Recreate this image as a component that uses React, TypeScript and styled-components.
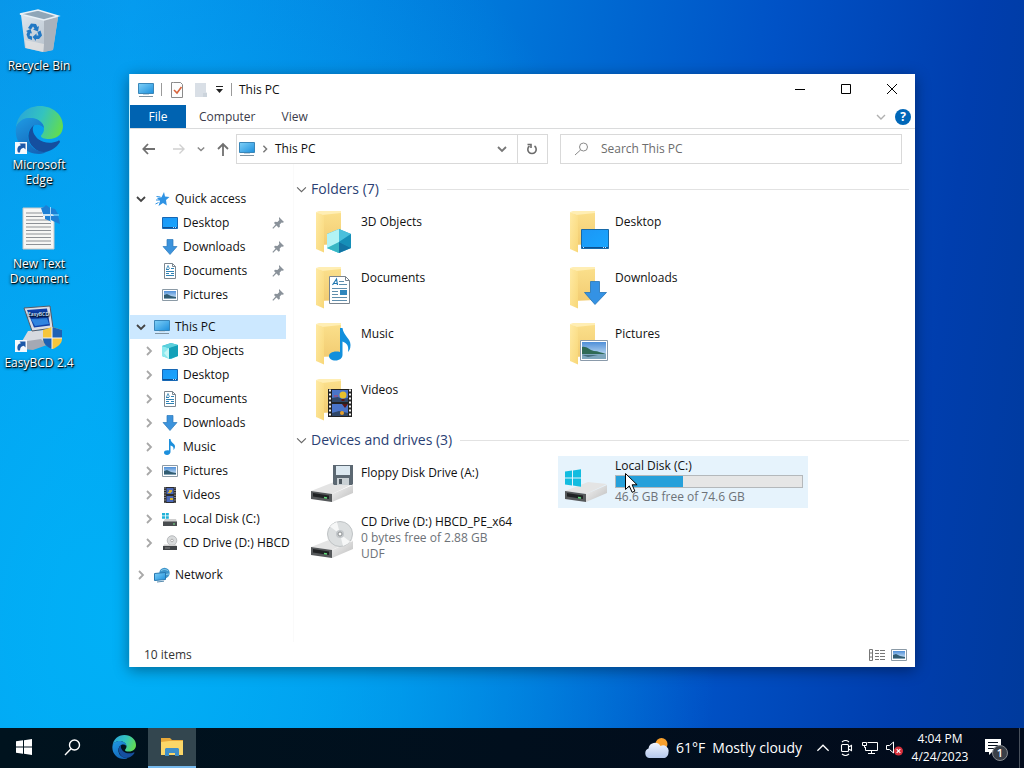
import React from "react";
import styled, { createGlobalStyle } from "styled-components";

const GlobalStyle = createGlobalStyle`
  *, *::before, *::after { box-sizing: border-box; }
  body {
    margin: 0;
    font-family: "Open Sans", "Noto Sans", sans-serif;
    font-size: 12px;
    line-height: 16px;
    color: #111;
    overflow: hidden;
  }
  button {
    font: inherit;
    color: inherit;
    background: none;
    border: 0;
    padding: 0;
    margin: 0;
    text-align: left;
  }
  ul { list-style: none; margin: 0; padding: 0; }
  h1, h2, p { margin: 0; font-weight: 400; font-size: inherit; }
  svg { display: block; flex: none; }
`;

/* ---------- layout ---------- */

const Screen = styled.div`
  display: flex;
  flex-direction: column;
  height: 100vh;
`;

const Desktop = styled.main`
  position: relative;
  flex: 1;
  min-height: 0;
  padding: 7px 1px;
  background:
    radial-gradient(ellipse 58% 110% at 12% 86%, rgba(0, 180, 248, 0.9), rgba(0, 178, 248, 0.7) 35%, rgba(0, 178, 248, 0) 100%),
    linear-gradient(97deg, #0a90e6 0%, #0694ec 12%, #0078da 44%, #0052c6 70%, #003eae 88%, #003a9c 100%);
`;

const Shortcuts = styled.ul`
  display: flex;
  flex-direction: column;
  width: 76px;
`;

const Shortcut = styled.button`
  display: flex;
  flex-direction: column;
  align-items: center;
  gap: 3px;
  width: 100%;
  height: 99px;
  color: #fff;
  line-height: 15px;
  text-align: center;
  text-shadow: 1px 1px 1px #000, 0 1px 3px #000;
`;

const Window = styled.section`
  position: absolute;
  inset: 74px 109px 61px 129px;
  display: flex;
  flex-direction: column;
  background: #fff;
  border-left: 1px solid #c2f2ff;
  box-shadow: 0 3px 14px rgba(0, 0, 0, 0.4);
`;

const TitleBar = styled.header`
  display: flex;
  align-items: center;
  justify-content: space-between;
  height: 31px;
  padding-left: 8px;
`;

const QuickTools = styled.div`
  display: flex;
  align-items: center;
  gap: 7px;
`;

const Divider = styled.span`
  width: 1px;
  height: 13px;
  background: #9a9a9a;
`;

const WindowTitle = styled.h1`
  flex: 1;
`;

const WindowButtons = styled.div`
  display: flex;
  align-self: flex-start;
`;

const WindowButton = styled.button`
  display: grid;
  place-items: center;
  width: 46px;
  height: 30px;
`;

const Ribbon = styled.nav`
  display: flex;
  align-items: center;
  height: 24px;
  border-bottom: 1px solid #dadbdc;
  padding-right: 4px;
`;

const RibbonTab = styled.button<{ $active?: boolean }>`
  height: 23px;
  padding: 0 ${(p) => (p.$active ? 0 : 13)}px;
  width: ${(p) => (p.$active ? "56px" : "auto")};
  text-align: center;
  color: ${(p) => (p.$active ? "#fff" : "#3b3b4a")};
  background: ${(p) => (p.$active ? "#0063b1" : "transparent")};
`;

const RibbonEnd = styled.div`
  display: flex;
  align-items: center;
  gap: 9px;
  margin-left: auto;
`;

const HelpButton = styled.button`
  width: 16px;
  height: 16px;
  border-radius: 50%;
  background: #0067b8;
  color: #fff;
  font-weight: 700;
  text-align: center;
`;

const AddressRow = styled.div`
  display: flex;
  align-items: center;
  gap: 12px;
  padding: 5px 13px 0 11px;
`;

const History = styled.div`
  display: flex;
  align-items: center;
  gap: 12px;
  margin-right: -5px;
`;

const AddressBar = styled.div`
  flex: 18 1 0;
  display: flex;
  align-items: center;
  height: 30px;
  border: 1px solid #d9d9d9;
`;

const Crumb = styled.button`
  display: flex;
  flex: 1;
  align-items: center;
  gap: 6px;
  padding-left: 2px;
`;

const AddressAction = styled.button<{ $bordered?: boolean }>`
  display: grid;
  place-items: center;
  width: 30px;
  height: 28px;
  border-left: ${(p) => (p.$bordered ? "1px solid #d9d9d9" : "0")};
`;

const SearchBox = styled.label`
  flex: 19 1 0;
  display: flex;
  align-items: center;
  gap: 12px;
  height: 30px;
  padding-left: 13px;
  border: 1px solid #d9d9d9;
`;

const SearchInput = styled.input`
  flex: 1;
  min-width: 0;
  border: 0;
  padding: 0;
  outline: 0;
  font: inherit;
  background: transparent;
  &::placeholder { color: #6d6d6d; opacity: 1; }
`;

const Body = styled.div`
  flex: 1;
  display: flex;
  min-height: 0;
`;

const Sidebar = styled.nav`
  display: flex;
  flex-direction: column;
  gap: 8px;
  width: 164px;
  padding: 23px 7px 0 0;
  border-right: 1px solid #fafafa;
`;

const TreeRow = styled.button<{ $child?: boolean; $selected?: boolean }>`
  display: flex;
  align-items: center;
  gap: 5px;
  width: 100%;
  height: 24px;
  padding-left: ${(p) => (p.$child ? 11 : 3)}px;
  padding-right: 2px;
  background: ${(p) => (p.$selected ? "#cce8ff" : "transparent")};
  white-space: nowrap;
`;

const Twist = styled.span`
  display: grid;
  place-items: center;
  flex: none;
  width: 16px;
`;

const RowLabel = styled.span`
  flex: 1;
  min-width: 0;
`;

const Content = styled.div`
  flex: 1;
  min-width: 0;
  padding: 15px 6px 0 2px;
`;

const GroupHeading = styled.h2`
  display: flex;
  align-items: center;
  gap: 4px;
  height: 20px;
  margin-bottom: 6px;
  font-size: 14px;
  line-height: 20px;
  color: #2b3f74;
  &::after {
    content: "";
    flex: 1;
    height: 1px;
    margin-left: 4px;
    background: #e2e2e2;
  }
`;

const Tiles = styled.ul`
  display: grid;
  grid-template-columns: repeat(auto-fill, 250px);
  gap: 4px;
  padding-left: 8px;
  margin-bottom: 5px;
`;

const Tile = styled.button<{ $hover?: boolean }>`
  display: flex;
  align-items: center;
  gap: 5px;
  width: 100%;
  height: 52px;
  padding: 0 5px 0 4px;
  background: ${(p) => (p.$hover ? "#e6f3fc" : "transparent")};
`;

const TileText = styled.span<{ $single?: boolean }>`
  flex: 1;
  display: flex;
  flex-direction: column;
  align-self: flex-start;
  padding-top: ${(p) => (p.$single ? 9 : 2)}px;
`;

const Muted = styled.span`
  color: #6d7278;
`;

const Capacity = styled.span`
  display: block;
  height: 13px;
  margin: 1px 0;
  border: 1px solid #b4b8bb;
  background: #e6e6e6;
`;

const CapacityFill = styled.span`
  display: block;
  height: 100%;
  background: #26a0da;
`;

const StatusBar = styled.footer`
  display: flex;
  align-items: center;
  gap: 6px;
  height: 25px;
  padding: 0 8px 0 14px;
  color: #333;
`;

const StatusText = styled.span`
  flex: 1;
`;

const Pointer = styled.svg`
  position: absolute;
  left: 624px;
  top: 472px;
`;

/* ---------- taskbar ---------- */

const Taskbar = styled.footer`
  display: flex;
  justify-content: space-between;
  height: 40px;
  color: #fff;
  background: linear-gradient(90deg, #00131e, #020b1c);
`;

const TaskGroup = styled.div`
  display: flex;
  gap: 4px;
`;

const TaskSet = styled.div`
  display: flex;
`;

const TaskButton = styled.button<{ $active?: boolean }>`
  display: grid;
  place-items: center;
  width: 48px;
  height: 40px;
  background: ${(p) => (p.$active ? "#33464f" : "transparent")};
  border-bottom: 2px solid ${(p) => (p.$active ? "#76b9ed" : "transparent")};
`;

const Tray = styled.div`
  display: flex;
  align-items: center;
`;

const Weather = styled.button`
  display: flex;
  align-items: center;
  gap: 7px;
  margin-right: 14px;
  font-size: 14px;
  white-space: nowrap;
`;

const TrayIcons = styled.div`
  display: flex;
  align-items: center;
  gap: 8px;
`;

const Clock = styled.button`
  width: 72px;
  line-height: 18px;
  text-align: center;
`;

const Notifications = styled.button`
  display: flex;
  padding: 0 9px 0 8px;
`;

const ShowDesktop = styled.button`
  width: 5px;
  height: 40px;
  border-left: 1px solid #48505c;
`;

/* ---------- drawings ---------- */

const HiddenSvg = styled.svg`
  position: absolute;
`;

const Defs = () => (
  <HiddenSvg width="0" height="0" aria-hidden="true">
    <defs>
      <linearGradient id="screen" x1="0" y1="0" x2="1" y2="1">
        <stop offset="0" stopColor="#7fd0f8" /><stop offset="1" stopColor="#1c8fdc" />
      </linearGradient>
      <linearGradient id="blue" x1="0" y1="0" x2="1" y2="1">
        <stop offset="0" stopColor="#1c96f5" /><stop offset="1" stopColor="#18a6ff" />
      </linearGradient>
      <linearGradient id="flap" x1="0" y1="0" x2="1" y2="1">
        <stop offset="0" stopColor="#ffeaa4" /><stop offset="1" stopColor="#f8d778" />
      </linearGradient>
      <linearGradient id="inner" x1="0" y1="0" x2="0" y2="1">
        <stop offset="0" stopColor="#fbe08c" /><stop offset="1" stopColor="#f2cc72" />
      </linearGradient>
      <linearGradient id="edgeTop" x1="0" y1="0.3" x2="1" y2="0.6">
        <stop offset="0" stopColor="#2aa5d8" /><stop offset="0.5" stopColor="#33c3c0" /><stop offset="1" stopColor="#63dc4e" />
      </linearGradient>
      <linearGradient id="edgeMid" x1="0" y1="0" x2="0.6" y2="1">
        <stop offset="0" stopColor="#1f9be4" /><stop offset="1" stopColor="#1465b8" />
      </linearGradient>
      <linearGradient id="drive" x1="0" y1="0" x2="1" y2="1">
        <stop offset="0" stopColor="#f4f4f4" /><stop offset="1" stopColor="#bdbdbd" />
      </linearGradient>
      <linearGradient id="bin" x1="0" y1="0" x2="1" y2="1">
        <stop offset="0" stopColor="#dde6ee" /><stop offset="1" stopColor="#aeb9c4" />
      </linearGradient>
      <linearGradient id="cloud" x1="0" y1="0" x2="0" y2="1">
        <stop offset="0" stopColor="#f0f5ff" /><stop offset="1" stopColor="#b4c8ec" />
      </linearGradient>
      <linearGradient id="photo" x1="0" y1="0" x2="0" y2="1">
        <stop offset="0" stopColor="#4f8fd8" /><stop offset="1" stopColor="#dff0fa" />
      </linearGradient>
    </defs>
  </HiddenSvg>
);

const Chevron = ({ dir = "down", size = 10, color = "#666", weight = 1.8 }: { dir?: "down" | "right" | "up"; size?: number; color?: string; weight?: number }) => {
  const d = { down: "M1 3l4 4 4-4", right: "M3 1l4 4-4 4", up: "M1 7l4-4 4 4" }[dir];
  return (
    <svg width={size} height={size} viewBox="0 0 10 10" fill="none" stroke={color} strokeWidth={weight}>
      <path d={d} />
    </svg>
  );
};

const EdgeLogo = ({ size }: { size: number }) => (
  <svg width={size} height={size} viewBox="0 0 48 48">
    <path d="M1 22C2 9 12 0 25 0c13 0 23 9 23 20 0 8-6 13-14 13-5 0-8-1-8-3 0-1 3-3 3-7 0-6-6-11-14-11C8 12 2 17 1 22z" fill="url(#edgeTop)" />
    <path d="M1 22c1-5 6-10 14-10 8 0 14 5 14 10-3-4-10-5-14 1-5 8-1 19 9 22 4 1 7 1 9 0-3 2-6 3-9 3C10 48-1 36 1 22z" fill="url(#edgeMid)" />
    <path d="M19 19c-7 5-8 16 0 23 6 6 15 4 19 1 3-2 5-4 7-7 0-1-1-2-2-1-7 3-15 2-20-2-4-4-7-9-4-14z" fill="#154f9f" />
  </svg>
);

const ShortcutArrow = () => (
  <g>
    <path d="M0 36h12v12H0z" fill="#f6f9fd" />
    <path d="M3 46.500c-1.500-4 0-7 3-7.200L4.500 37.500h6v6L8.800 41.800C6.500 42 5 43.500 5 46.500z" fill="#1d58a8" />
  </g>
);

const RecycleBin = () => (
  <svg width="48" height="48" viewBox="0 0 48 48">
    <path d="M6 8l37 2-5 33-10 2-18-4z" fill="url(#bin)" />
    <path d="M29 13l14-3-5 33-9 2z" fill="#a9b2bc" />
    <path d="M5 7l18-4 20 6-14 4z" fill="#8fa6b8" stroke="#e8f0f6" strokeWidth="1.500" />
    <path d="M10 33l19 4-1 8-17-4z" fill="#e2e2e2" opacity=".8" />
    <g fill="#2178c4">
      <path d="M13 21l3-4.500 5 .5 1.500 3 1.500-1-1 5.500-5-2 1.500-1-1.500-2-2 3z" />
      <path d="M22.500 25l3-1.500 1.500 5-3 3.500-3 0v2l-3.500-4 4-3.500v2l2 0z" />
      <path d="M11 24l4.500-2 1.500 4.500-1.500-.5-1 2.500 2.500 1v3.500l-4-1.500-1.500-4 1-2.500z" />
    </g>
  </svg>
);

const EdgeShortcut = () => (
  <svg width="48" height="48" viewBox="0 0 48 48">
    <EdgeLogo size={48} />
    <ShortcutArrow />
  </svg>
);

const TextDocument = () => (
  <svg width="48" height="48" viewBox="0 0 48 48">
    <path d="M8 3h23l8 8v33H8z" fill="#f6f6f4" stroke="#c8c8c8" />
    <path d="M11 8h16M11 11.500h17M11 15h25M11 18.500h25M11 22h25M11 25.500h25M11 29h25M11 32.500h25M11 36h25M11 39.500h25" stroke="#8d9196" strokeWidth="1.200" />
    <path d="M26 3l3-1 2-2 4 3v6h-7zM36 3l4 1 3 5h-7zM30 11h5v5l-5-2zM36 11h7l1 3 1 5-5-2-4-2z" fill="#1d7fd4" />
    <path d="M35.500 2v15M28 10h16" stroke="#9ed4f8" />
  </svg>
);

const EasyBcd = () => (
  <svg width="48" height="48" viewBox="0 0 48 48">
    <path d="M13 27l16-1 3 9-9 9H9l-3-5z" fill="#d7dae0" />
    <path d="M6 38l20-3 6 6-14 5-11-1z" fill="#a5a9b4" />
    <path d="M9 4l26-2 3 22-21 3z" fill="#d9dde6" stroke="#565b69" />
    <path d="M12 6l20-1.500 3 17-16 2z" fill="#1041a8" />
    <path d="M16 15l16-1 2 6-14 2z" fill="#2f84e0" />
    <text x="13" y="12" fontSize="5" fontWeight="600" fill="#d8ecff">EasyBCD</text>
    <path d="M28 26l9-3 10 3v9c0 5-5 8-9 10-5-2-10-5-10-10z" fill="#f6c63c" />
    <path d="M37 23l10 3v8H37zM28 34h9v11c-5-2-9-5-9-11z" fill="#1d61b4" />
    <path d="M37 23v22M28 34h19" stroke="#f4f4f4" />
    <ShortcutArrow />
  </svg>
);

/* 16px icons */
const PcIcon = () => (
  <svg width="16" height="16" viewBox="0 0 16 16">
    <path d="M.5 1.500h15v10H.5z" fill="url(#screen)" stroke="#3a86b8" />
    <path d="M5 12h6v1H5z" fill="#c2d3de" />
    <path d="M1 14.500h14" stroke="#7e93a2" />
  </svg>
);
const DesktopIcon = () => (
  <svg width="16" height="16" viewBox="0 0 16 16">
    <path d="M.5 2.500h15v11H.5z" fill="url(#blue)" stroke="#1767b4" />
    <path d="M1 12.500h14" stroke="#114f90" />
    <path d="M11 12.500h3" stroke="#b8dcff" strokeDasharray="1 1" />
  </svg>
);
const DownloadIcon = () => (
  <svg width="16" height="16" viewBox="0 0 16 16">
    <path d="M5 .5h6v7h4L8 15.500 1 7.500h4z" fill="#3c93dc" stroke="#2b79ba" strokeWidth=".7" />
  </svg>
);
const DocumentIcon = () => (
  <svg width="16" height="16" viewBox="0 0 16 16">
    <path d="M2.500.5h8l3 3v12h-11z" fill="#fff" stroke="#7c8790" />
    <path d="M10.500.5v3h3" fill="none" stroke="#7c8790" />
    <path d="M4 6.500h3M9 5.500h3M4 8.500h8M4 10.500h3M9 10.500h3M4 12.500h8" stroke="#2f82b4" />
    <path d="M4.500 6L6 2.500 7.500 6" fill="none" stroke="#2f82b4" strokeWidth=".8" />
  </svg>
);
const PictureIcon = () => (
  <svg width="16" height="16" viewBox="0 0 16 16">
    <path d="M.5 2.500h15v11H.5z" fill="#fff" stroke="#8b9aa6" />
    <path d="M2 4h12v8H2z" fill="url(#photo)" />
    <path d="M2 8l3-1 4 2 5 1v1.500H2z" fill="#315c72" />
  </svg>
);
const MusicIcon = () => (
  <svg width="16" height="16" viewBox="0 0 16 16">
    <path d="M7 0h1.500c0 4 4.500 4 4.500 7.500 0 2-1 3-1.500 3.500.5-3-1-4-3-4.500V13c0 1.500-1.500 3-3.500 3S2 15 2 13.500 4 11 7 11.500z" fill="#1c8fdc" />
  </svg>
);
const VideoIcon = () => (
  <svg width="16" height="16" viewBox="0 0 16 16">
    <path d="M2 0h12v16H2z" fill="#2b2b2b" />
    <path d="M4.500 1h7v6h-7zM4.500 9h7v6h-7z" fill="#4b69b8" />
    <path d="M7 3h3v2H7zM6 5h3v1H6zM8 11h3v2H8z" fill="#d8b434" />
    <path d="M3 .5v15M13 .5v15" stroke="#ececec" strokeDasharray="1 1.400" />
  </svg>
);
const CubeIcon = () => (
  <svg width="16" height="16" viewBox="0 0 16 16">
    <path d="M0 3l9-3 7 2v11l-7 3-9-3z" fill="#29b8cf" />
    <path d="M0 3l7 2v11l-7-3z" fill="#8ce9ee" /><path d="M7 5l9-3v11l-9 3z" fill="#14a0b8" /><path d="M0 3l9-3 7 2-9 3z" fill="#5dd0dc" /><path d="M7 5v11l-5-6z" fill="#c6f6f6" />
  </svg>
);
const DiskIcon = () => (
  <svg width="16" height="16" viewBox="0 0 16 16">
    <path d="M0 2h3v2.500H0zM3.800 2h3v2.500h-3zM0 5.300h3v2.500H0zM3.800 5.300h3v2.500h-3z" fill="#1fb1d8" />
    <path d="M3 8h11l1 3H1z" fill="#cfcfcf" /><path d="M1 10.500h14V15H1z" fill="#4a4d50" /><path d="M11 13h2" stroke="#7bea8c" />
  </svg>
);
const CdIcon = () => (
  <svg width="16" height="16" viewBox="0 0 16 16">
    <circle cx="10" cy="5.500" r="4.800" fill="#d8dadb" stroke="#a5a8aa" strokeWidth=".7" /><circle cx="10" cy="5.500" r="1.300" fill="#fff" stroke="#888" strokeWidth=".6" />
    <path d="M2 9.500h12l1 2H1z" fill="#cfcfcf" /><path d="M1 11h14v4H1z" fill="#3f4245" /><path d="M3 13h5" stroke="#888" />
  </svg>
);
const NetworkIcon = () => (
  <svg width="16" height="16" viewBox="0 0 16 16">
    <circle cx="10.500" cy="6" r="5.200" fill="#3e95cb" /><path d="M7 4c2-2 5-2 7 0M7 8l8-1" stroke="#8fd0ee" fill="none" />
    <path d="M.5 6.500l11-1v7l-11 1z" fill="url(#screen)" stroke="#2878b0" /><path d="M3 15l7-.8" stroke="#5a8cae" />
  </svg>
);
const StarIcon = () => (
  <svg width="16" height="16" viewBox="0 0 16 16">
    <path d="M10 1l1 4.500 4.500.5-3.500 3 .8 5.500L9 12l-4.500 3 1.500-5L3 7l4.500-.8z" fill="#2f93e4" />
    <path d="M2.500 5.500l4 .5M2 9h3M1.500 13l3-1.500" stroke="#2f93e4" />
  </svg>
);
const PinIcon = () => (
  <svg width="12" height="12" viewBox="0 0 12 12">
    <path d="M7 0l5 5-1.300.8-1-.4-2 2 .2 2.400-1.200 1L2 6l1-1.200 2.400.2 2-2-.4-1z" fill="#8a929a" /><path d="M4.500 7.500L.8 11.300" stroke="#8a929a" strokeWidth="1.200" />
  </svg>
);

/* 48px tile icons */
const Folder = ({ children }: { children: React.ReactNode }) => (
  <svg width="48" height="48" viewBox="0 0 48 48">
    <path d="M12 5l21-1v33l-21 1z" fill="url(#inner)" />
    <path d="M8 5l3-1 22 0v2L14 8z" fill="#ffeeb4" />
    <path d="M8 5l8 3.500v37L8 42z" fill="url(#flap)" />
    {children}
  </svg>
);
const BigCube = () => (
  <Folder>
    <path d="M31 22l12 5v14l-12 5-12-5V27z" fill="#27a9ce" /><path d="M19 27l12 5v14l-12-5z" fill="#7de6f0" /><path d="M31 22l-12 5v14l12-6z" fill="#b2f3f5" />
    <path d="M31 22l12 5-12 8z" fill="#49bfdc" /><path d="M43 27v14l-12-6z" fill="#168fb8" /><path d="M31 35l12 6-12 5z" fill="#1274a4" /><path d="M31 35l-12 6 12 5z" fill="#38b6c4" />
  </Folder>
);
const BigDocument = () => (
  <Folder>
    <path d="M21.500 13.500h16l4 4v23h-20z" fill="#fff" stroke="#7a848e" /><path d="M37.500 13.500v4h4" fill="none" stroke="#7a848e" />
    <path d="M24.500 22l4-6 1 6M25.500 20.500h4" fill="none" stroke="#1f76b0" strokeWidth="1.200" />
    <path d="M31 18.500h5M31 21.500h8M24 25.500h15M24 28.500h6M24 31.500h6M24 34.500h15M24 37.500h15" stroke="#5f8ead" />
    <path d="M32 27h7v5h-7z" fill="#2f86bd" />
  </Folder>
);
const BigMusic = () => (
  <Folder>
    <path d="M32 9h2.500c1 8 8 10 8 17 0 4-1.500 6-2.500 7 1-6-1-9-5.500-10.500V36c0 3-3 5.500-7 5.500S21 39.500 21 37s4-5.500 11-4z" fill="#128fdc" />
  </Folder>
);
const BigVideo = () => (
  <Folder>
    <path d="M20 14h24v28H20z" fill="#222" /><path d="M24 15h16v12H24zM24 29h16v12H24z" fill="#4a74c8" />
    <path d="M24 23l6-1 4 2 6-1v4H24zM24 38l7-2 9 2v3H24z" fill="#2f4668" /><circle cx="35" cy="20" r="3.500" fill="#e6c02c" /><path d="M33.500 24h3v2h-3zM34 29h6l-3 4z" fill="#5c1616" /><circle cx="34" cy="38" r="2" fill="#e6a02c" /><path d="M26 21h4" stroke="#c0405c" />
    <path d="M22 14.500v27M42 14.500v27" stroke="#f4f4f4" strokeWidth="2" strokeDasharray="2 2" />
  </Folder>
);
const BigDesktop = () => (
  <Folder>
    <path d="M19.500 22.500h27v19h-27z" fill="url(#blue)" stroke="#1769a8" /><path d="M20 40.500h26" stroke="#0d5090" /><path d="M21 40.500h1M41 40.500h4" stroke="#d0e8ff" strokeDasharray="1 1" />
  </Folder>
);
const BigDownload = () => (
  <Folder>
    <path d="M28.500 18.500h9v11h7L33 41.500 22.500 29.500h6z" fill="#3492e4" stroke="#2374b8" strokeWidth=".8" />
  </Folder>
);
const BigPicture = () => (
  <Folder>
    <path d="M18.500 21.500h27v20h-27z" fill="#fff" stroke="#8a9aaa" /><path d="M20 23h24v17H20z" fill="url(#photo)" />
    <path d="M20 28c5-1 7 3 12 4 4 0 8 2 12 3v1H20z" fill="#2f6a55" /><path d="M20 35h24v5H20z" fill="#7da6bc" /><path d="M20 36l16 0-10 2z" fill="#446c7c" />
  </Folder>
);

const DriveBase = ({ children }: { children: React.ReactNode }) => (
  <svg width="48" height="48" viewBox="0 0 48 48">
    <path d="M3 33l23-9 19 2-21 10z" fill="#e4e4e4" />
    <path d="M24 36l21-9v8L24 44z" fill="url(#drive)" />
    <path d="M3 33l21 3v8L3 41z" fill="#55585a" />
    <path d="M5 35l16 2.500v3.500L5 38.500z" fill="#202224" />
    <path d="M16 39.500l3 .5" stroke="#64e07c" strokeWidth="1.500" />
    {children}
  </svg>
);
const FloppyDrive = () => (
  <DriveBase>
    <path d="M25 7h20v19l-1 1H26l-1-1z" fill="#5c6872" /><path d="M28 8h14v9H28z" fill="#dce8f0" /><path d="M29 20h12v7H29z" fill="#c9d0d4" /><path d="M31 21h3v5h-3z" fill="#4e5860" />
  </DriveBase>
);
const CdDrive = () => (
  <DriveBase>
    <circle cx="32" cy="20" r="12.500" fill="#dcdfe0" stroke="#bfc3c5" /><path d="M32 20L22 12.500a12.500 12.500 0 0 1 7-4.600zM32 20l10 7.500a12.500 12.500 0 0 1-7 4.600z" fill="#f6f7f7" />
    <circle cx="32" cy="20" r="4" fill="#c3c7ca" /><circle cx="32" cy="20" r="2" fill="#fff" stroke="#8c9092" />
  </DriveBase>
);
const WindowsDrive = () => (
  <DriveBase>
    <path d="M3 13.500l7-1v7H3zM11 12.400l8-1.200v8.300h-8zM3 20.500h7v7l-7-1zM11 20.500h8v8.300l-8-1.200z" fill="#12bce0" />
  </DriveBase>
);

/* ---------- data ---------- */

const quickAccess = [
  { name: "Desktop", Icon: DesktopIcon },
  { name: "Downloads", Icon: DownloadIcon },
  { name: "Documents", Icon: DocumentIcon },
  { name: "Pictures", Icon: PictureIcon },
];

const thisPc = [
  { name: "3D Objects", Icon: CubeIcon },
  { name: "Desktop", Icon: DesktopIcon },
  { name: "Documents", Icon: DocumentIcon },
  { name: "Downloads", Icon: DownloadIcon },
  { name: "Music", Icon: MusicIcon },
  { name: "Pictures", Icon: PictureIcon },
  { name: "Videos", Icon: VideoIcon },
  { name: "Local Disk (C:)", Icon: DiskIcon },
  { name: "CD Drive (D:) HBCD", Icon: CdIcon },
];

const folders = [
  { name: "3D Objects", Icon: BigCube },
  { name: "Desktop", Icon: BigDesktop },
  { name: "Documents", Icon: BigDocument },
  { name: "Downloads", Icon: BigDownload },
  { name: "Music", Icon: BigMusic },
  { name: "Pictures", Icon: BigPicture },
  { name: "Videos", Icon: BigVideo },
];

const shortcuts = [
  { name: "Recycle Bin", Icon: RecycleBin },
  { name: "Microsoft Edge", Icon: EdgeShortcut },
  { name: "New Text Document", Icon: TextDocument },
  { name: "EasyBCD 2.4", Icon: EasyBcd },
];

const used = Math.floor((1 - 46.6 / 74.6) * 100) - 1;

/* ---------- sections ---------- */

const Explorer = () => (
  <Window aria-label="This PC">
    <TitleBar>
      <QuickTools>
        <PcIcon />
        <Divider />
        <button aria-label="Properties">
          <svg width="16" height="16" viewBox="-2 0 16 16"><path d="M2.500.5h7l2 2v13h-11V.5z" fill="#fdfdfd" stroke="#8a8a8a" /><path d="M3 8l3 3 4.500-6" fill="none" stroke="#d8643c" strokeWidth="1.600" /></svg>
        </button>
        <button aria-label="New folder">
          <svg width="16" height="16" viewBox="-1 0 16 16"><path d="M2 1h11v9l1 1v4H2z" fill="#d9dfe6" /><path d="M10 11h4v4h-4z" fill="#ccd4dc" /></svg>
        </button>
        <button aria-label="Customize Quick Access Toolbar">
          <svg width="9" height="9" viewBox="0 0 9 9"><path d="M1 1.500h7" stroke="#222" /><path d="M1 4h7L4.500 8z" fill="#222" /></svg>
        </button>
        <Divider />
        <WindowTitle>This PC</WindowTitle>
      </QuickTools>
      <WindowButtons>
        <WindowButton aria-label="Minimize">
          <svg width="10" height="10"><path d="M0 5.500h10" stroke="#000" /></svg>
        </WindowButton>
        <WindowButton aria-label="Maximize">
          <svg width="10" height="10"><path d="M.5.5h9v9h-9z" fill="none" stroke="#000" /></svg>
        </WindowButton>
        <WindowButton aria-label="Close">
          <svg width="10" height="10"><path d="M0 0l10 10M10 0L0 10" stroke="#000" /></svg>
        </WindowButton>
      </WindowButtons>
    </TitleBar>

    <Ribbon aria-label="Ribbon">
      <RibbonTab $active>File</RibbonTab>
      <RibbonTab>Computer</RibbonTab>
      <RibbonTab>View</RibbonTab>
      <RibbonEnd>
        <button aria-label="Expand the Ribbon"><Chevron color="#b0b0b0" weight={1.4} /></button>
        <HelpButton aria-label="Help">?</HelpButton>
      </RibbonEnd>
    </Ribbon>

    <AddressRow>
      <History>
        <button aria-label="Back"><svg width="16" height="16" fill="none" stroke="#707070" strokeWidth="1.800"><path d="M14 8H2.500M7 3L2.300 8 7 13" /></svg></button>
        <button aria-label="Forward"><svg width="16" height="16" fill="none" stroke="#d0d0d0" strokeWidth="1.400"><path d="M4 8h11M10.500 3.500L15 8l-4.500 4.500" /></svg></button>
        <button aria-label="Recent locations"><Chevron size={8} color="#888" /></button>
        <button aria-label="Up"><svg width="12" height="16" fill="none" stroke="#707070" strokeWidth="1.800"><path d="M6 15V3M1 8l5-5 5 5" /></svg></button>
      </History>
      <AddressBar>
        <Crumb>
          <PcIcon />
          <Chevron dir="right" size={8} color="#777" />
          <span>This PC</span>
        </Crumb>
        <AddressAction aria-label="Previous locations"><Chevron color="#777" /></AddressAction>
        <AddressAction $bordered aria-label="Refresh">
          <svg width="12" height="12" viewBox="0 0 12 12" fill="none" stroke="#6c6c6c" strokeWidth="1.600"><path d="M8.500 3A4.200 4.200 0 1 1 3.500 3" /><path d="M1.500 1.500h3.500v3.500" /></svg>
        </AddressAction>
      </AddressBar>
      <SearchBox>
        <svg width="15" height="14" viewBox="0 0 15 14" fill="none" stroke="#8a8a8a"><circle cx="9.500" cy="5" r="4" /><path d="M6.500 8L1 13" /></svg>
        <SearchInput type="search" placeholder="Search This PC" aria-label="Search This PC" />
      </SearchBox>
    </AddressRow>

    <Body>
      <Sidebar aria-label="Navigation pane">
        <ul>
          <li><TreeRow><Twist><Chevron color="#444" /></Twist><StarIcon /><RowLabel>Quick access</RowLabel></TreeRow></li>
          {quickAccess.map(({ name, Icon }) => (
            <li key={name}><TreeRow $child><Twist /><Icon /><RowLabel>{name}</RowLabel><PinIcon /></TreeRow></li>
          ))}
        </ul>
        <ul>
          <li><TreeRow $selected><Twist><Chevron color="#444" /></Twist><PcIcon /><RowLabel>This PC</RowLabel></TreeRow></li>
          {thisPc.map(({ name, Icon }) => (
            <li key={name}><TreeRow $child><Twist><Chevron dir="right" color="#a8a8a8" /></Twist><Icon /><RowLabel>{name}</RowLabel></TreeRow></li>
          ))}
        </ul>
        <ul>
          <li><TreeRow><Twist><Chevron dir="right" color="#a8a8a8" /></Twist><NetworkIcon /><RowLabel>Network</RowLabel></TreeRow></li>
        </ul>
      </Sidebar>

      <Content>
        <GroupHeading><Chevron size={11} color="#666" weight={1} />Folders (7)</GroupHeading>
        <Tiles>
          {folders.map(({ name, Icon }) => (
            <li key={name}><Tile><Icon /><TileText $single>{name}</TileText></Tile></li>
          ))}
        </Tiles>
        <GroupHeading><Chevron size={11} color="#666" weight={1} />Devices and drives (3)</GroupHeading>
        <Tiles>
          <li><Tile><FloppyDrive /><TileText $single>Floppy Disk Drive (A:)</TileText></Tile></li>
          <li>
            <Tile $hover>
              <WindowsDrive />
              <TileText>
                <span>Local Disk (C:)</span>
                <Capacity><CapacityFill style={{ width: `${used}%` }} /></Capacity>
                <Muted>46.6 GB free of 74.6 GB</Muted>
              </TileText>
            </Tile>
          </li>
          <li>
            <Tile>
              <CdDrive />
              <TileText>
                <span>CD Drive (D:) HBCD_PE_x64</span>
                <Muted>0 bytes free of 2.88 GB</Muted>
                <Muted>UDF</Muted>
              </TileText>
            </Tile>
          </li>
        </Tiles>
      </Content>
    </Body>

    <StatusBar>
      <StatusText>10 items</StatusText>
      <button aria-label="Details view">
        <svg width="17" height="14" fill="none" stroke="#777"><path d="M1.500 1.500h3v11h-3zM1.500 5h3M1.500 9h3" /><path d="M7 2.500h4M12 2.500h5M7 5.500h4M12 5.500h5M7 8.500h4M12 8.500h5M7 11.500h4M12 11.500h5" /></svg>
      </button>
      <button aria-label="Large icons view"><PictureIcon /></button>
    </StatusBar>
  </Window>
);

export default function App() {
  return (
    <Screen>
      <GlobalStyle />
      <Defs />
      <Desktop>
        <Shortcuts>
          {shortcuts.map(({ name, Icon }) => (
            <li key={name}><Shortcut><Icon /><span>{name}</span></Shortcut></li>
          ))}
        </Shortcuts>
        <Explorer />
        <Pointer width="14" height="22" viewBox="0 0 14 22">
          <path d="M1.500 1.500v16l3.800-3.600 2.800 6.400 2.800-1.200-2.800-6.300h5z" fill="#fff" stroke="#000" />
        </Pointer>
      </Desktop>
      <Taskbar>
        <TaskGroup>
          <TaskSet>
            <TaskButton aria-label="Start">
              <svg width="16" height="16" viewBox="0 0 16 16" fill="#fff"><path d="M0 2.300l7-1v6.300H0zM8 1.200L16 0v7.600H8zM0 8.500h7v6.300l-7-1zM8 8.500h8V16l-8-1.200z" /></svg>
            </TaskButton>
            <TaskButton aria-label="Search">
              <svg width="17" height="17" viewBox="0 0 17 17" fill="none" stroke="#fff" strokeWidth="1.400"><circle cx="10.500" cy="6" r="5" /><path d="M7 9.700L1 16" /></svg>
            </TaskButton>
          </TaskSet>
          <TaskSet>
            <TaskButton aria-label="Microsoft Edge"><EdgeLogo size={24} /></TaskButton>
            <TaskButton $active aria-label="File Explorer">
              <svg width="22" height="18" viewBox="0 0 22 18"><path d="M0 0h9l2 2h11v4H0z" fill="#e8a93a" /><path d="M0 4l8-1h14v14H0z" fill="#fbd768" /><path d="M4 18v-7l1-1h12l1 1v7h-4v-3H8v3z" fill="#3f8fc8" /></svg>
            </TaskButton>
          </TaskSet>
        </TaskGroup>
        <Tray>
          <Weather>
            <svg width="25" height="22" viewBox="0 0 25 22"><circle cx="17.500" cy="7" r="6" fill="#f8a02c" /><path d="M5 21a5 5 0 0 1-.5-9.500A6.500 6.500 0 0 1 16.500 9a5.500 5.500 0 0 1 8 6c0 4-2.500 6-5 6z" fill="url(#cloud)" /></svg>
            <span>61°F</span>
            <span>Mostly cloudy</span>
          </Weather>
          <TrayIcons>
            <button aria-label="Show hidden icons"><Chevron dir="up" size={14} color="#fff" weight={0.9} /></button>
            <button aria-label="Meet Now">
              <svg width="16" height="16" viewBox="0 0 16 16" fill="none" stroke="#fff" strokeWidth="1.100"><rect x="3.500" y="4.500" width="7" height="7" rx="1" /><path d="M10.500 7l3-1.500v5l-3-1.500M4 2C6 .3 9 .3 11 2M4 14c2 1.700 5 1.700 7 0" /></svg>
            </button>
            <button aria-label="Network">
              <svg width="16" height="16" viewBox="0 0 16 16" fill="none" stroke="#fff"><path d="M5.500 2.500h10v8H3.500V7M6 13.500h7M9.500 10.500v3" /><path d="M.5 2.500h4v3h-4zM2.500 5.500v2h1" /></svg>
            </button>
            <button aria-label="Volume muted">
              <svg width="18" height="16" viewBox="0 0 18 16"><path d="M.5 5.500h3l4-3.500v11l-4-3.500h-3z" fill="none" stroke="#fff" /><circle cx="12.500" cy="11" r="4.500" fill="#d8303c" /><path d="M10.700 9.200l3.600 3.600M14.300 9.200l-3.600 3.600" stroke="#fff" strokeWidth="1.200" /></svg>
            </button>
          </TrayIcons>
          <Clock><div>4:04 PM</div><div>4/24/2023</div></Clock>
          <Notifications aria-label="1 new notification">
            <svg width="26" height="26" viewBox="0 0 26 26"><path d="M1 4h16v13h-9l-3 3v-3H1z" fill="#fff" /><path d="M4 7.500h10M4 10.500h10M4 13.500h7" stroke="#06101e" /><circle cx="16" cy="18" r="7.500" fill="#3a3f47" stroke="#868a90" /><text x="16" y="22" textAnchor="middle" fontSize="11" fontWeight="600" fill="#fff">1</text></svg>
          </Notifications>
          <ShowDesktop aria-label="Show desktop" />
        </Tray>
      </Taskbar>
    </Screen>
  );
}
